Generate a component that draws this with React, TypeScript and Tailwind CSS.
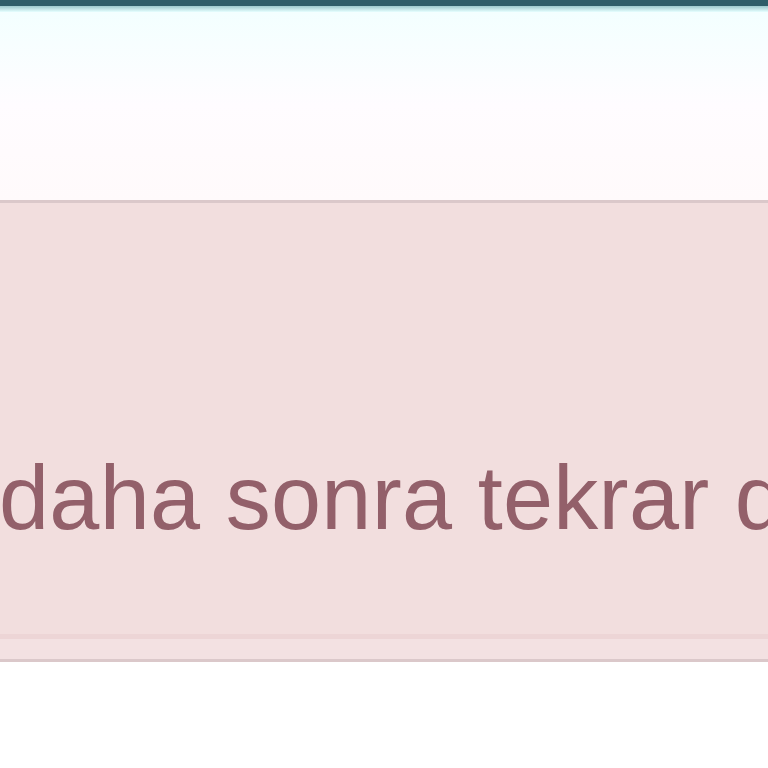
export default function App() {
  return (
    <div className="w-[768px] h-[768px] overflow-hidden bg-white flex flex-col" style={{ fontFamily: '"Liberation Sans", Arial, sans-serif' }}>
      <div className="h-[6px] bg-[#2f5e69] shrink-0" />
      <div className="h-[6px] bg-gradient-to-b from-[#9cc9cc] to-[#e6ffff] shrink-0" />
      <div className="h-[188px] bg-gradient-to-b from-[#f3ffff] via-[#fffcff] to-[#fffafb] shrink-0" />
      <div className="h-[462px] shrink-0 border-y-[3px] border-[#dbc8ca] bg-[#f2dede] flex flex-col">
        <div className="h-[250px] shrink-0" />
        <div className="whitespace-nowrap text-[90px] leading-none text-[#93606a] -ml-[1px] tracking-[0.3px]">
          daha sonra tekrar deneyin.
        </div>
        <div className="flex-1" />
        <div className="h-[5px] bg-[#edd5d6] shrink-0" />
        <div className="h-[20px] bg-[#f3e1e2] shrink-0" />
      </div>
      <div className="flex-1 bg-white" />
    </div>
  );
}
